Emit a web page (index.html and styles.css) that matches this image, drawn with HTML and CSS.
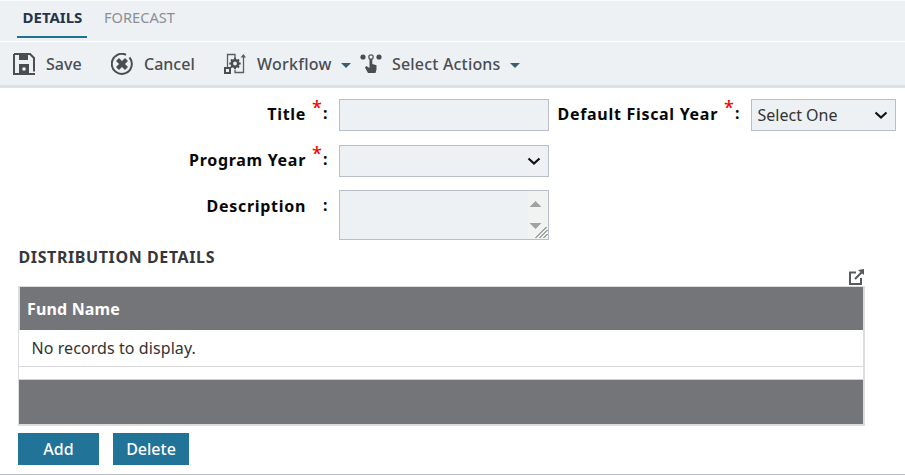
FILE: index.html
```html
<!DOCTYPE html>
<html lang="en">
<head>
<meta charset="utf-8">
<title>Details</title>
<link rel="stylesheet" href="styles.css">
</head>
<body>
<nav class="tabs">
  <a class="tab active">DETAILS</a>
  <a class="tab">FORECAST</a>
</nav>
<div class="toolbar">
  <a class="tool save">
    <svg width="22" height="22" viewBox="0 0 22 22"><path fill="none" stroke="#4a4d52" stroke-width="2" d="M1 1H17L21 5V18.500M22 21H1V1"/><path fill="#4a4d52" d="M6 1H15V7H6ZM6 11H16V21H6Z"/><circle cx="11" cy="16" r="1.800" fill="#eef2f5"/></svg>
    <span>Save</span>
  </a>
  <a class="tool cancel">
    <svg width="22" height="22" viewBox="0 0 22 22"><path fill="none" stroke="#4a4d52" stroke-width="2" d="M15 1.800A10 10 0 1 0 18.500 4.500"/><path stroke="#4a4d52" stroke-width="4.200" d="M6.500 6.500L15.500 15.500M15.500 6.500L6.500 15.500"/></svg>
    <span>Cancel</span>
  </a>
  <a class="tool workflow">
    <svg width="22" height="22" viewBox="0 0 22 22"><path fill="none" stroke="#5a5d61" stroke-width="1.300" d="M3.500 15V1.500H11V5M11 17V19.500H19.500V3"/><path fill="#5a5d61" d="M16.500 4.500L19.500 1L22 4.500Z"/><path fill="none" stroke="#4a4d52" stroke-width="2" d="M1 15H6V20H1Z"/><circle cx="11" cy="10.500" r="3.200" fill="none" stroke="#4a4d52" stroke-width="2.600"/><path stroke="#4a4d52" stroke-width="2" d="M11 4.800V7.500M11 13.500V16.200M5.300 10.500H8M14 10.500H16.700M7 6.500L9 8.500M13 12.500L15 14.500M15 6.500L13 8.500M9 12.500L7 14.500"/></svg>
    <span>Workflow</span><i class="caret"></i>
  </a>
  <a class="tool actions">
    <svg width="22" height="22" viewBox="0 0 22 22"><g fill="#4a4d52"><circle cx="3" cy="4" r="2.600"/><circle cx="19" cy="4" r="2.600"/><path d="M9.500 6Q11 4.500 12.300 6V11L16.500 12.200V16.500L15.500 20H8L5 14.500L6.200 13L9.500 15Z"/></g><circle cx="11" cy="4" r="2.200" fill="#edf1f5" stroke="#5a5d61" stroke-width="1.300"/></svg>
    <span>Select Actions</span><i class="caret"></i>
  </a>
</div>
<main>
  <form class="form">
    <label>Title</label><span class="mark"><b>*</b>:</span>
    <div class="field"></div>
    <label>Default Fiscal Year</label><span class="mark"><b>*</b>:</span>
    <div class="field select"><span>Select One</span><svg class="chev" width="14" height="9" viewBox="0 0 14 9"><path d="M1.500 1.500L7 6.500L12.500 1.500"/></svg></div>
    <label class="row2">Program Year</label><span class="mark"><b>*</b>:</span>
    <div class="field select"><svg class="chev" width="14" height="9" viewBox="0 0 14 9"><path d="M1.500 1.500L7 6.500L12.500 1.500"/></svg></div>
    <label class="row3">Description</label><span class="mark">:</span>
    <div class="field area"><svg width="20" height="48" viewBox="0 0 20 48"><path fill="#f1f2f2" d="M0 0H20V48H0Z"/><path fill="#a2a2a2" d="M1.500 16L7.500 10L13.500 16ZM1.500 32L7.500 38L13.500 32Z"/><path stroke="#555" stroke-width="1" d="M7.500 47L18.500 36M11.500 47L19.500 39M15.500 47L19.500 43"/></svg></div>
  </form>
  <div class="heading"><h2>DISTRIBUTION DETAILS</h2>
    <svg class="open" width="17" height="17" viewBox="0 0 17 17"><path fill="none" stroke="#565a5d" stroke-width="2" d="M8 3.500H2V15H13V9M7 10L14 3"/><path fill="#565a5d" d="M10 1L16 0V6Z"/></svg>
  </div>
  <section class="grid">
    <div class="ghead">Fund Name</div>
    <div class="gbody">No records to display.</div>
    <div class="gfoot"></div>
  </section>
  <div class="buttons"><button class="add">Add</button><button class="delete">Delete</button></div>
</main>
</body>
</html>
```
FILE: styles.css
```css
* { box-sizing: border-box; }
body { margin: 0; height: 475px; overflow: hidden; background: #fff; font-family: "Noto Sans", sans-serif; font-size: 16px; color: #333; border-bottom: 1px solid #b9bbc5; }
svg { display: block; flex: none; }
.tabs { display: flex; height: 42px; padding-left: 17px; background: #edf1f4; border-top: 1px solid #fafbfc; border-bottom: 1px solid #fff; font-size: 14.6px; }
.tab { height: 37px; line-height: 33px; padding: 0 5px 0 6px; color: #8b8f94; margin-right: 11px; }
.tab.active { width: 70px; padding-left: 5.5px; color: #26344a; font-weight: 700; font-size: 15px; border-bottom: 2px solid #1d7396; }
.toolbar { display: flex; align-items: center; height: 46px; padding-left: 13px; background: #edf1f4; border-bottom: 3px solid #dbe0e4; color: #4a4d52; font-weight: 500; }
.tool { display: flex; align-items: center; }
.tool svg + span { margin-left: 11px; }
.save { width: 98px; }
.cancel { width: 113px; }
.workflow { width: 136px; letter-spacing: .24px; }
.actions { letter-spacing: .18px; }
.tool.actions svg + span { margin-left: 10px; }
.caret { margin-left: 9px; margin-top: 3px; border: 5px solid transparent; border-top-color: #3a6070; border-bottom: 0; }
.form { display: grid; grid-template-columns: 306px 33px 210px 169px 33px 145px; grid-template-rows: 32px 32px 50px; row-gap: 14px; padding-top: 11px; color: #080808; }
label { font-weight: 700; text-align: right; line-height: 30px; white-space: nowrap; letter-spacing: .7px; }
.row2, .row3 { grid-column: 1; }
.mark { position: relative; font-weight: 700; line-height: 29px; padding-left: 17px; }
.mark b { position: absolute; left: 6px; top: -6px; font-size: 18px; font-weight: 500; color: #f00; }
.field { display: flex; align-items: center; justify-content: flex-end; background: #edf1f4; border: 1px solid #b9bfca; height: 32px; }
.select { padding-right: 7px; }
.select span { margin: 0 auto 0 5.5px; color: #333; }
.chev path { fill: none; stroke: #111; stroke-width: 2.2; }
.area { height: 50px; margin-top: -1px; }
.heading { display: flex; justify-content: space-between; height: 45px; width: 865px; padding-left: 18.5px; }
h2 { margin: 1px 0 0; font-size: 16px; line-height: 30px; font-weight: 700; letter-spacing: .6px; color: #36373a; }
.open { margin-top: 28px; }
.grid { margin-left: 18px; width: 847px; height: 140px; border: 1px solid #dcdce0; border-width: 1px 2px 2px 1px; }
.ghead { height: 43px; line-height: 44px; padding-left: 7px; background: #747579; border-left: 1px solid #dcdce0; color: #fff; font-weight: 700; letter-spacing: .16px; }
.gbody { height: 37px; line-height: 36px; padding-left: 12.5px; border-bottom: 1px solid #d8d8dc; margin-bottom: 12px; letter-spacing: .08px; }
.gfoot { height: 45px; background: #747579; border-top: 1px solid #d0d0d4; }
.buttons { display: flex; gap: 14px; padding: 7px 0 0 18px; }
button { height: 32px; border: 0; padding: 0; background: #217398; color: #fff; font: 500 16px "Noto Sans", sans-serif; }
.add { width: 81px; }
.delete { width: 76px; }
```
